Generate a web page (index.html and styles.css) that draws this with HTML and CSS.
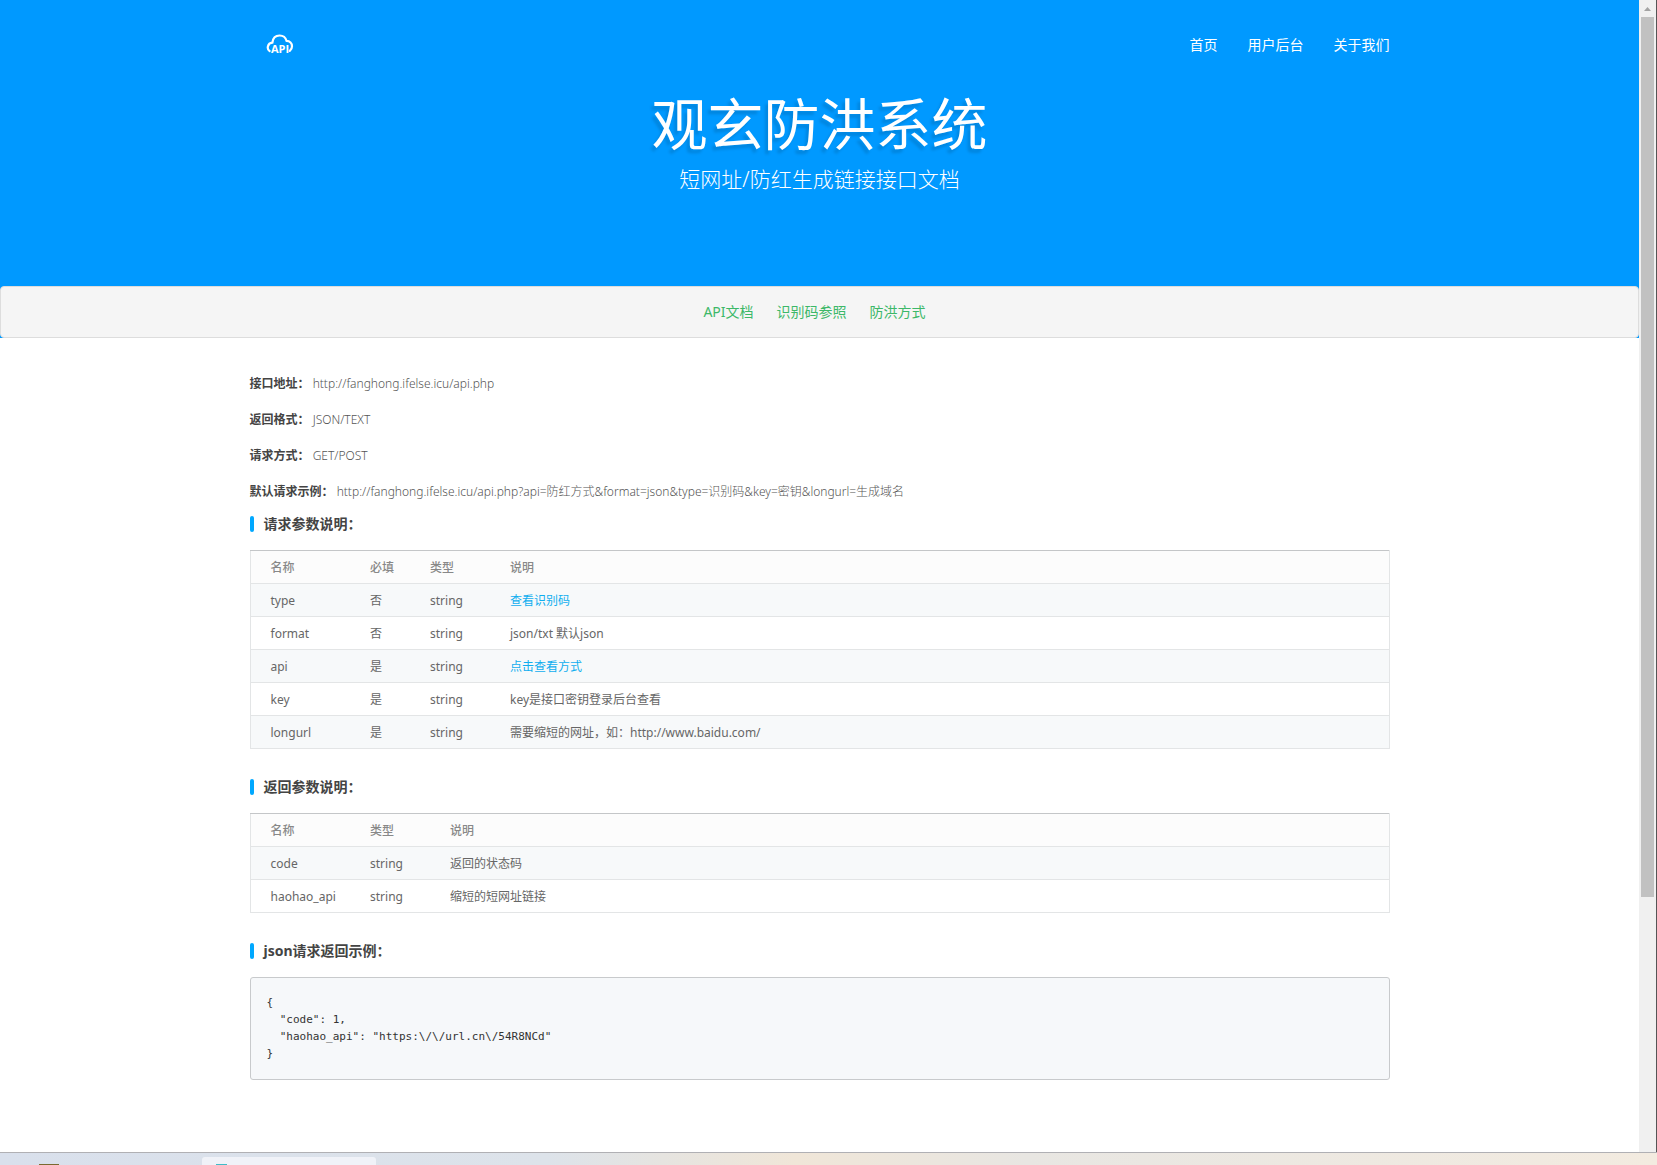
FILE: index.html
```html
<!DOCTYPE html>
<html lang="zh-CN">
<head>
	<meta charset="utf-8">
	<meta name="viewport" content="width=device-width, initial-scale=1">
	<title>观玄防洪系统</title>
	<link rel="stylesheet" href="styles.css">
</head>
<body>
	<div class="window">
		<div class="page">
			<header class="header">
				<div class="container topbar">
					<a class="logo" href="#" aria-label="API">
						<svg width="28" height="22" viewBox="0 0 28 22">
							<path d="M3.600 18C2 17 1.500 15.200 1.900 13.400c.5-2.200 2.300-3.600 4.500-3.800C6.900 4.900 9.900 2.500 13.600 2.500c3.500 0 6 2 6.900 5.300 3.400.2 5.500 2.500 5.500 5.400 0 2-.8 3.600-2.200 4.600" fill="none" stroke="#fff" stroke-width="2.200" stroke-linecap="round"/>
							<text class="logo-text" x="14" y="20" text-anchor="middle">API</text>
						</svg>
					</a>
					<nav class="menu">
						<a href="#">首页</a>
						<a href="#">用户后台</a>
						<a href="#">关于我们</a>
					</nav>
				</div>
				<div class="banner">
					<h1>观玄防洪系统</h1>
					<p>短网址/防红生成链接接口文档</p>
				</div>
				<nav class="tabs">
					<a href="#api">API文档</a>
					<a href="#type">识别码参照</a>
					<a href="#mode">防洪方式</a>
				</nav>
			</header>

			<main class="container content" id="api">
				<p class="info"><strong>接口地址：</strong> http://fanghong.ifelse.icu/api.php</p>
				<p class="info"><strong>返回格式：</strong> JSON/TEXT</p>
				<p class="info"><strong>请求方式：</strong> GET/POST</p>
				<p class="info"><strong>默认请求示例：</strong> http://fanghong.ifelse.icu/api.php?api=防红方式&amp;format=json&amp;type=识别码&amp;key=密钥&amp;longurl=生成域名</p>

				<h2>请求参数说明：</h2>
				<table>
					<colgroup>
						<col class="col-name">
						<col class="col-must">
						<col class="col-type">
						<col>
					</colgroup>
					<thead>
						<tr><th>名称</th><th>必填</th><th>类型</th><th>说明</th></tr>
					</thead>
					<tbody>
						<tr><td>type</td><td>否</td><td>string</td><td><a href="#type">查看识别码</a></td></tr>
						<tr><td>format</td><td>否</td><td>string</td><td>json/txt 默认json</td></tr>
						<tr><td>api</td><td>是</td><td>string</td><td><a href="#mode">点击查看方式</a></td></tr>
						<tr><td>key</td><td>是</td><td>string</td><td>key是接口密钥登录后台查看</td></tr>
						<tr><td>longurl</td><td>是</td><td>string</td><td>需要缩短的网址，如：http://www.baidu.com/</td></tr>
					</tbody>
				</table>

				<h2>返回参数说明：</h2>
				<table>
					<colgroup>
						<col class="col-name">
						<col class="col-type">
						<col>
					</colgroup>
					<thead>
						<tr><th>名称</th><th>类型</th><th>说明</th></tr>
					</thead>
					<tbody>
						<tr><td>code</td><td>string</td><td>返回的状态码</td></tr>
						<tr><td>haohao_api</td><td>string</td><td>缩短的短网址链接</td></tr>
					</tbody>
				</table>

				<h2>json请求返回示例：</h2>
				<pre>{
  "code": 1,
  "haohao_api": "https:\/\/url.cn\/54R8NCd"
}</pre>
			</main>
		</div>
		<div class="scrollbar" aria-hidden="true">
			<svg class="scroll-up" width="17" height="17" viewBox="0 0 17 17"><path d="M5 11l3.500-4 3.500 4z" fill="#a3a3a3"/></svg>
			<div class="thumb"></div>
			<div class="track"></div>
		</div>
	</div>
	<div class="taskbar" aria-hidden="true">
		<span class="task-icon"></span>
		<span class="task-active"><span class="task-dot"></span></span>
	</div>
</body>
</html>
```

FILE: styles.css
```css
*
{
	box-sizing: border-box;
}
body
{
	margin: 0;
	height: 100vh;
	display: flex;
	flex-direction: column;
	overflow: hidden;
	font-family: "Noto Sans", "Noto Sans CJK SC", sans-serif;
	font-size: 12px;
	color: #666;
	background: #fff;
}
a
{
	text-decoration: none;
	color: #10aeef;
}
.window
{
	flex: 1;
	min-height: 0;
	display: flex;
	border-right: 1px solid #555;
}
.page
{
	flex: 1;
	overflow: hidden;
}
.container
{
	max-width: 1170px;
	margin: 0 auto;
	padding: 0 15px;
}

/* 顶部 */
.header
{
	background: #0099ff;
}
.topbar
{
	display: flex;
	justify-content: space-between;
	align-items: center;
	height: 88px;
}
.logo
{
	display: flex;
	padding-left: 16px;
}
.logo-text
{
	font: bold 11px "Open Sans", sans-serif;
	fill: #fff;
}
.menu
{
	display: flex;
	gap: 30px;
	font-size: 14px;
}
.menu a
{
	color: #fff;
}
.banner
{
	height: 198px;
	text-align: center;
	color: #fff;
}
.banner h1
{
	margin: 0;
	font-size: 56px;
	line-height: 70px;
	font-weight: 400;
	text-shadow: -3px 4px 3px rgba(0, 0, 0, .13);
}
.banner p
{
	margin: 0;
	font-size: 21px;
	line-height: 42px;
	font-weight: 300;
}
.tabs
{
	display: flex;
	justify-content: center;
	align-items: center;
	gap: 23px;
	height: 52px;
	padding: 0 10px 2px 0;
	border: 1px solid #ddd;
	border-radius: 4px;
	background: #f5f5f5;
	font-size: 14px;
}
.tabs a
{
	color: #3cb868;
}

/* 文档内容 */
.content
{
	padding-top: 36px;
}
.info
{
	margin: 0 0 16px;
	line-height: 20px;
	color: #555;
	font-weight: 300;
}
.info strong
{
	color: #444;
	font-weight: 700;
}
h2
{
	display: flex;
	align-items: center;
	gap: 10px;
	margin: 0 0 16px;
	font-size: 14px;
	line-height: 20px;
	color: #444;
}
h2::before
{
	content: "";
	width: 4px;
	height: 16px;
	border-radius: 2px;
	background: #00a8ff;
}
.info + h2
{
	margin-top: -4px;
}
table
{
	width: 100%;
	margin-bottom: 28px;
	table-layout: fixed;
	border-collapse: collapse;
	border: 1px solid #e3e5e6;
	border-top-color: #c4c6c8;
}
.col-name
{
	width: 100px;
}
.col-must
{
	width: 60px;
}
.col-type
{
	width: 80px;
}
tr
{
	height: 33px;
	border-bottom: 1px solid #e3e5e6;
}
th, td
{
	padding: 1px 0 0 20px;
	line-height: 20px;
	text-align: left;
	white-space: nowrap;
}
th
{
	color: #888;
	font-weight: 500;
	background: #fcfcfc;
}
tbody tr:nth-child(odd)
{
	background: #f7f9fa;
}
pre
{
	margin: 0;
	padding: 16px 16px 17px;
	border: 1px solid #c8cacc;
	border-radius: 3px;
	background: #f6f8fa;
	color: #333;
	font: 11px/17px "DejaVu Sans Mono", monospace;
}

/* 滚动条 */
.scrollbar
{
	display: flex;
	flex-direction: column;
	width: 17px;
	background: #f0f0f0;
}
.scroll-up
{
	flex: none;
}
.thumb
{
	flex: 31;
	margin: 0 2px;
	background: #c1c1c1;
}
.track
{
	flex: 9;
}

/* 任务栏 */
.taskbar
{
	display: flex;
	align-items: flex-end;
	height: 13px;
	border-top: 1px solid #b0b0b4;
	background: linear-gradient(90deg, #d9e0ec, #dde3ea 33%, #e6e4e0 40%, #f0e6d8 48%, #e8e6e2 62%, #f3ebe0);
}
.task-icon
{
	width: 20px;
	height: 1px;
	margin: 0 143px 0 39px;
	background: #7a6a30;
}
.task-active
{
	display: flex;
	align-items: flex-end;
	width: 174px;
	height: 8px;
	padding-left: 14px;
	border-radius: 3px 3px 0 0;
	background: #f0f2f8;
}
.task-dot
{
	width: 11px;
	height: 1px;
	background: #40bcc8;
}
```
